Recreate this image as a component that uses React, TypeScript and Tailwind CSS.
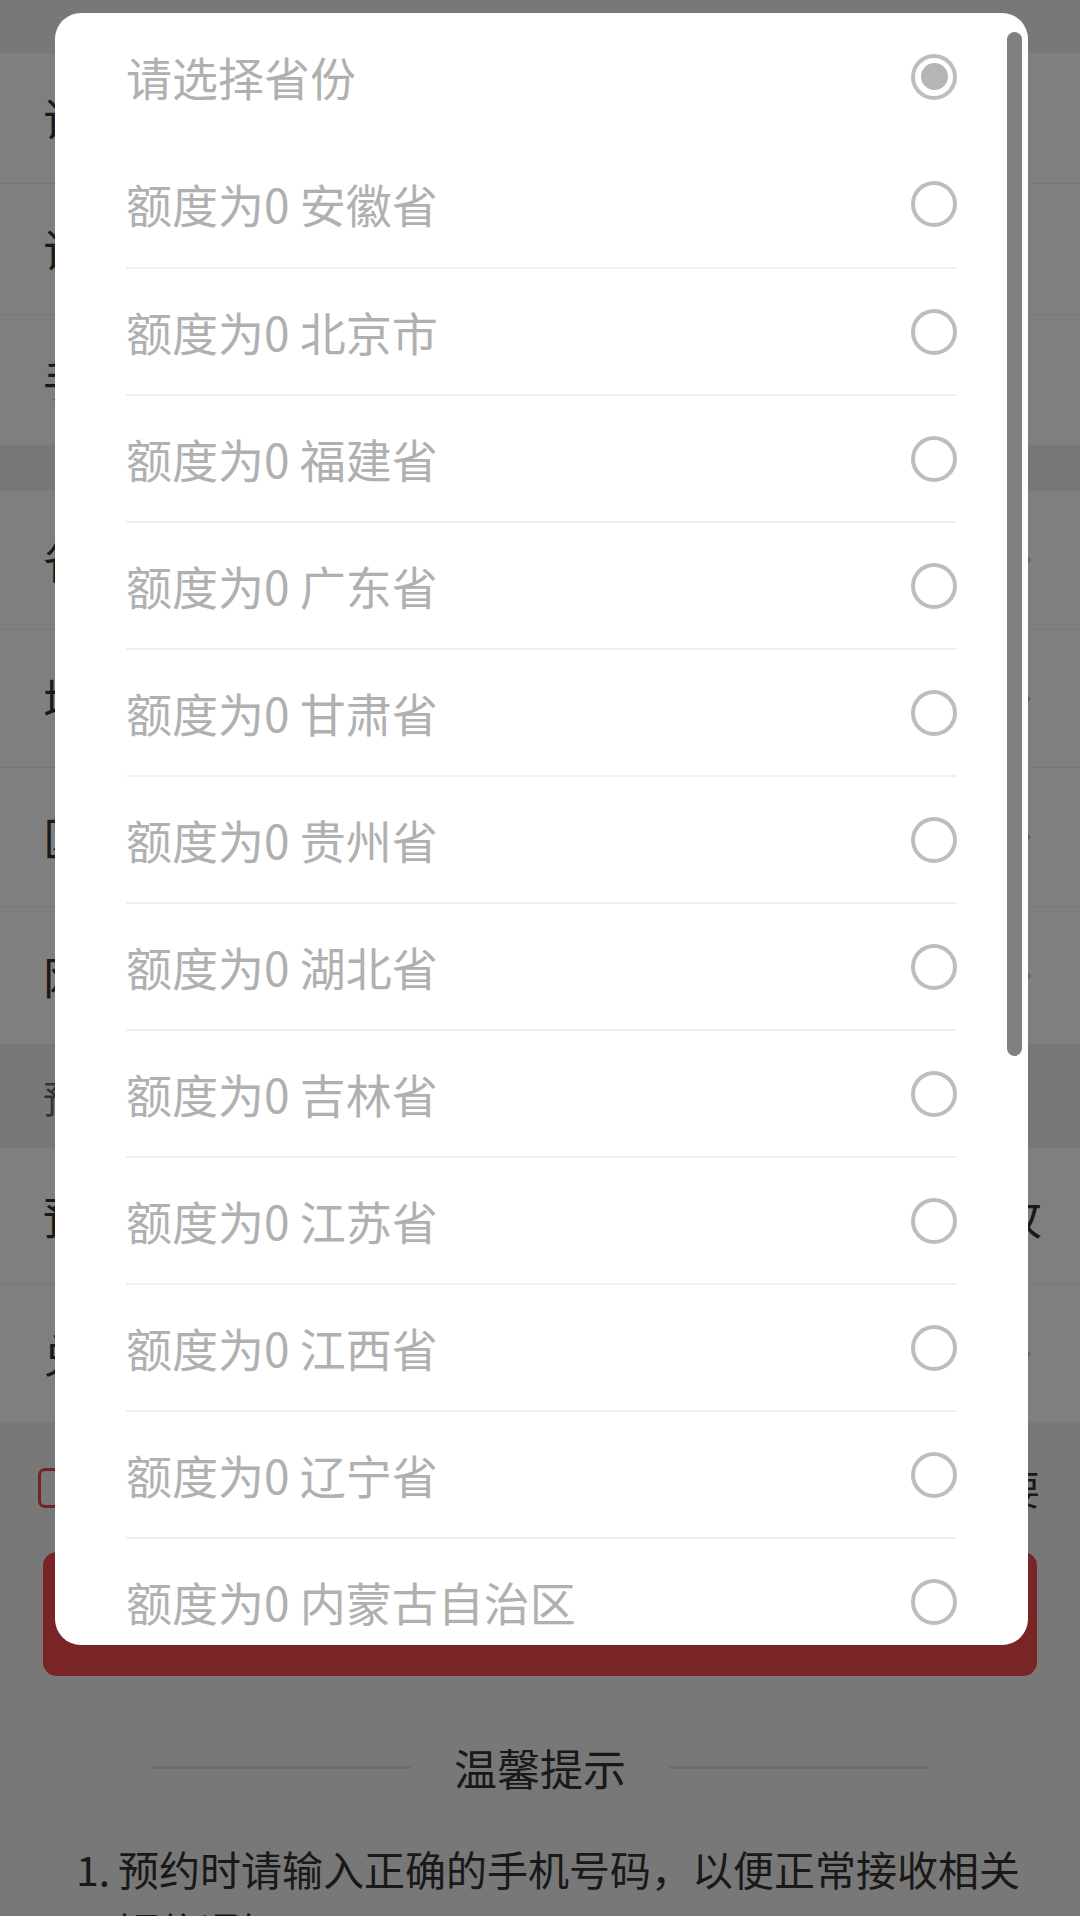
import React from 'react';
import { ChevronRight } from 'lucide-react';

const provinces = [
    '安徽省',
    '北京市',
    '福建省',
    '广东省',
    '甘肃省',
    '贵州省',
    '湖北省',
    '吉林省',
    '江苏省',
    '江西省',
    '辽宁省',
    '内蒙古自治区',
    '宁夏回族自治区',
];

const FormRow: React.FC<{ label: string; height: string; arrow?: boolean; right?: string }> = ({ label, height, arrow, right }) => (
    <div className={`flex items-center justify-between bg-white border-b border-[#eeeeee] pl-[43px] pr-[38px] ${height}`}>
        <span className="text-[45px] text-[#333]">{label}</span>
        {arrow && <ChevronRight className="w-[34px] h-[34px] text-[#c4c4c4]" strokeWidth={2} />}
        {right && <span className="text-[45px] text-[#333]">{right}</span>}
    </div>
);

const Radio: React.FC<{ checked?: boolean }> = ({ checked }) => (
    <span className="w-[46px] h-[46px] rounded-full border-[4px] border-[#bdbdbd] flex items-center justify-center shrink-0">
        {checked && <span className="w-[27px] h-[27px] rounded-full bg-[#b5b5b5]" />}
    </span>
);

const App: React.FC = () => {
    return (
        <div className="relative w-[1080px] h-[1916px] overflow-hidden bg-[#f0f0f0] font-['Noto_Sans_CJK_SC','Noto_Sans',sans-serif]">
            {/* 底层页面 */}
            <div className="h-[53px] overflow-hidden">
                <div className="flex items-end h-[53px] -mt-[48px] pl-[48px] gap-[180px] text-[45px] text-[#333]">
                    <span>兑换信息</span>
                    <span>必填</span>
                </div>
            </div>
            <div>
                <FormRow label="证件类型" height="h-[131px]" />
                <FormRow label="证件号码" height="h-[131px]" />
                <FormRow label="手机号码" height="h-[131px]" />
            </div>
            <div className="h-[45px]" />
            <div>
                <FormRow label="省份" height="h-[139px]" arrow />
                <FormRow label="城市" height="h-[138px]" arrow />
                <FormRow label="区县" height="h-[139px]" arrow />
                <FormRow label="网点" height="h-[138px]" arrow />
            </div>
            <div className="h-[103px] flex items-center pl-[43px] text-[38px] text-[#666]">预约信息</div>
            <div>
                <FormRow label="预约数量" height="h-[137px]" right="枚" />
                <FormRow label="兑换日期" height="h-[138px]" arrow />
            </div>
            <div className="h-[129px] flex items-center pl-[38px] gap-[42px]">
                <span className="w-[40px] h-[40px] rounded-[7px] border-[3px] border-[#e04848] shrink-0" />
                <span className="text-[40px] text-[#333] whitespace-nowrap">我已阅读并同意《预约须知》相关条款及兑换规则要</span>
            </div>
            <div className="mx-[43px] h-[124px] rounded-[14px] bg-[#f44a4a] flex items-center justify-center text-[48px] text-white">
                立即预约
            </div>
            <div className="mt-[60px] h-[62px] flex items-center justify-center gap-[43px]">
                <span className="w-[259px] h-[3px] bg-[#dcdcdc]" />
                <span className="text-[43px] text-[#333]">温馨提示</span>
                <span className="w-[259px] h-[3px] bg-[#dcdcdc]" />
            </div>
            <div className="mt-[39px] pl-[76px] pr-[60px] text-[41px] leading-[62px] text-[#333]">
                <div className="flex">
                    <span className="w-[42px] shrink-0">1.</span>
                    <span>预约时请输入正确的手机号码，以便正常接收相关短信通知。</span>
                </div>
            </div>

            {/* 遮罩 */}
            <div className="absolute inset-0 bg-black/50" />

            {/* 省份选择弹窗 */}
            <div className="absolute left-[55px] top-[13px] w-[973px] h-[1632px] rounded-[26px] bg-white overflow-hidden">
                <div className="flex flex-col">
                    <div className="h-[127px] mx-[71px] flex items-center justify-between">
                        <span className="text-[46px] text-[#b0b0b0]">请选择省份</span>
                        <Radio checked />
                    </div>
                    {provinces.map((p, i) => (
                        <div
                            key={p}
                            className={`h-[127px] mx-[71px] flex items-center justify-between shrink-0 ${i > 0 ? 'border-t-2 border-[#f0f0f0]' : ''}`}
                        >
                            <span className="text-[46px] text-[#b0b0b0]">额度为0 {p}</span>
                            <Radio />
                        </div>
                    ))}
                </div>
                <div className="absolute right-[6px] top-[19px] w-[15px] h-[1024px] rounded-full bg-[#808080]" />
            </div>
        </div>
    );
};

export default App;
